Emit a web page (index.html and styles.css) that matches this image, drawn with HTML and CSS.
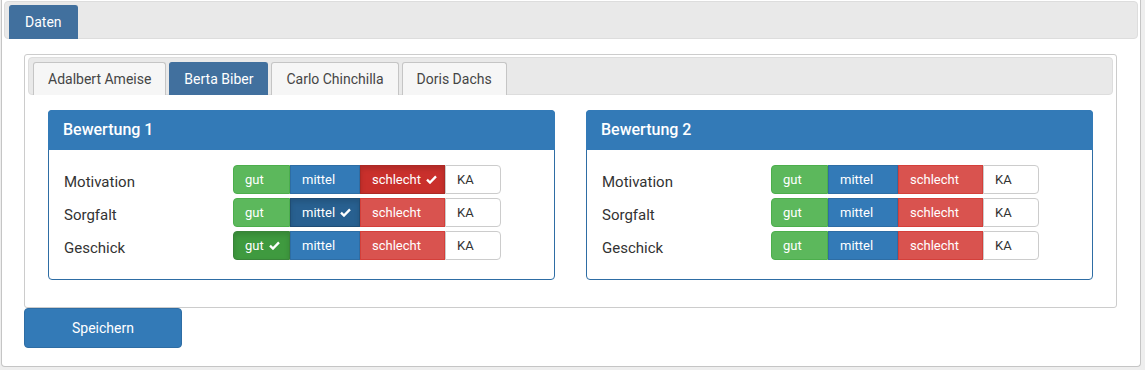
FILE: index.html
```html
<!DOCTYPE html>
<html lang="de">
<head>
  <meta charset="UTF-8" />
  <title>Bewertung</title>
  <link rel="stylesheet" href="styles.css">
</head>
<body>
  <div class="tabs">
    <div class="tabbar">
      <div class="tab active">Daten</div>
    </div>
    <div class="content">
      <div class="inner">
        <div class="tabbar inner-bar">
          <div class="tab">Adalbert Ameise</div>
          <div class="tab active">Berta Biber</div>
          <div class="tab">Carlo Chinchilla</div>
          <div class="tab">Doris Dachs</div>
        </div>

        <div class="panels">
          <div class="panel">
            <div class="panel-heading">Bewertung 1</div>
            <div class="panel-body">
              <div class="row">
                <div class="label">Motivation</div>
                <div class="group">
                  <button class="btn gut">gut</button>
                  <button class="btn mittel">mittel</button>
                  <button class="btn schlecht on">schlecht <svg class="check" viewBox="0 0 12 10"><path d="M1 5.2 L4.3 8.4 L11 1.6" /></svg></button>
                  <button class="btn ka">KA</button>
                </div>
              </div>
              <div class="row">
                <div class="label">Sorgfalt</div>
                <div class="group">
                  <button class="btn gut">gut</button>
                  <button class="btn mittel on">mittel <svg class="check" viewBox="0 0 12 10"><path d="M1 5.2 L4.3 8.4 L11 1.6" /></svg></button>
                  <button class="btn schlecht">schlecht</button>
                  <button class="btn ka">KA</button>
                </div>
              </div>
              <div class="row">
                <div class="label">Geschick</div>
                <div class="group">
                  <button class="btn gut on">gut <svg class="check" viewBox="0 0 12 10"><path d="M1 5.2 L4.3 8.4 L11 1.6" /></svg></button>
                  <button class="btn mittel">mittel</button>
                  <button class="btn schlecht">schlecht</button>
                  <button class="btn ka">KA</button>
                </div>
              </div>
            </div>
          </div>

          <div class="panel">
            <div class="panel-heading">Bewertung 2</div>
            <div class="panel-body">
              <div class="row">
                <div class="label">Motivation</div>
                <div class="group">
                  <button class="btn gut">gut</button>
                  <button class="btn mittel">mittel</button>
                  <button class="btn schlecht">schlecht</button>
                  <button class="btn ka">KA</button>
                </div>
              </div>
              <div class="row">
                <div class="label">Sorgfalt</div>
                <div class="group">
                  <button class="btn gut">gut</button>
                  <button class="btn mittel">mittel</button>
                  <button class="btn schlecht">schlecht</button>
                  <button class="btn ka">KA</button>
                </div>
              </div>
              <div class="row">
                <div class="label">Geschick</div>
                <div class="group">
                  <button class="btn gut">gut</button>
                  <button class="btn mittel">mittel</button>
                  <button class="btn schlecht">schlecht</button>
                  <button class="btn ka">KA</button>
                </div>
              </div>
            </div>
          </div>
        </div>
      </div>
      <button class="save">Speichern</button>
    </div>
  </div>
</body>
</html>
```

FILE: styles.css
```css
body {
  margin: 0;
  background: #eee;
  font-family: Roboto, "Liberation Sans", sans-serif;
  color: #333;
}
.tabs {
  margin: 0 4px 0 1px;
  border: 1px solid #c5c5c5;
  border-top: none;
  border-radius: 0 0 4px 4px;
  background: #fff;
  padding: 1px 2px 18px;
}
.tabbar {
  display: flex;
  align-items: flex-end;
  gap: 3px;
  padding: 3px 4px 0;
  border: 1px solid #ddd;
  border-radius: 4px;
  background: #e9e9e9;
}
.tab {
  height: 33px;
  box-sizing: border-box;
  margin-bottom: -1px;
  padding: 8px 14px;
  font-size: 14px;
  line-height: 17px;
  color: #454545;
  background: #f6f6f6;
  border: 1px solid #c5c5c5;
  border-bottom: none;
  border-radius: 3px 3px 0 0;
}
.tabbar > .tab:first-child:last-child {
  height: 34px;
  padding: 8px 15px;
}
.tab.active {
  background: #41709e;
  border-color: #41709e;
  color: #fff;
}
.content {
  padding: 15px 21px 0 20px;
}
.inner {
  border: 1px solid #ccc;
  border-radius: 3px;
  padding: 2px 3px 27px;
}
.inner-bar {
  padding-top: 4px;
}
.panels {
  display: flex;
  gap: 31px;
  margin: 15px 20px 0;
}
.panel {
  flex: 1;
  border: 1px solid #2e6da4;
  border-radius: 4px;
  background: #fff;
}
.panel-heading {
  background: #337ab7;
  color: #fff;
  padding: 10px 15px 11px;
  font-size: 16px;
  font-weight: 500;
  line-height: 19px;
  margin: -1px -1px 0;
  border-radius: 4px 4px 0 0;
}
.panel-body {
  padding: 15px 15px 19px;
  display: flex;
  flex-direction: column;
  gap: 4px;
}
.row {
  display: flex;
  align-items: center;
}
.label {
  width: 169px;
  font-size: 15px;
  padding-top: 4px;
}
.group {
  display: flex;
}
.btn {
  box-sizing: border-box;
  height: 29px;
  padding: 0 0 0 11px;
  text-align: left;
  font-family: inherit;
  font-size: 13px;
  color: #fff;
  border: 1px solid transparent;
  display: flex;
  align-items: center;
  white-space: nowrap;
}
.gut {
  width: 57px;
  background: #5cb85c;
  border-color: #4cae4c;
  border-radius: 4px 0 0 4px;
}
.mittel {
  width: 70px;
  background: #337ab7;
  border-color: #2e6da4;
}
.schlecht {
  width: 85px;
  background: #d9534f;
  border-color: #d43f3a;
}
.ka {
  width: 56px;
  background: #fff;
  color: #333;
  border-color: #ccc;
  border-radius: 0 4px 4px 0;
}
.gut.on {
  background: #3f9a3f;
  border-color: #398439;
  box-shadow: inset 0 3px 5px rgba(0, 0, 0, 0.125);
}
.mittel.on {
  background: #286090;
  border-color: #204d74;
  box-shadow: inset 0 3px 5px rgba(0, 0, 0, 0.125);
}
.schlecht.on {
  background: #c9302c;
  border-color: #ac2925;
  box-shadow: inset 0 3px 5px rgba(0, 0, 0, 0.125);
}
.check {
  width: 11px;
  height: 9px;
  margin-left: 5px;
  fill: none;
  stroke: #fff;
  stroke-width: 2.6;
}
.save {
  display: block;
  width: 158px;
  height: 40px;
  background: #337ab7;
  border: 1px solid #2e6da4;
  border-radius: 4px;
  color: #fff;
  font-family: inherit;
  font-size: 14px;
}
```
